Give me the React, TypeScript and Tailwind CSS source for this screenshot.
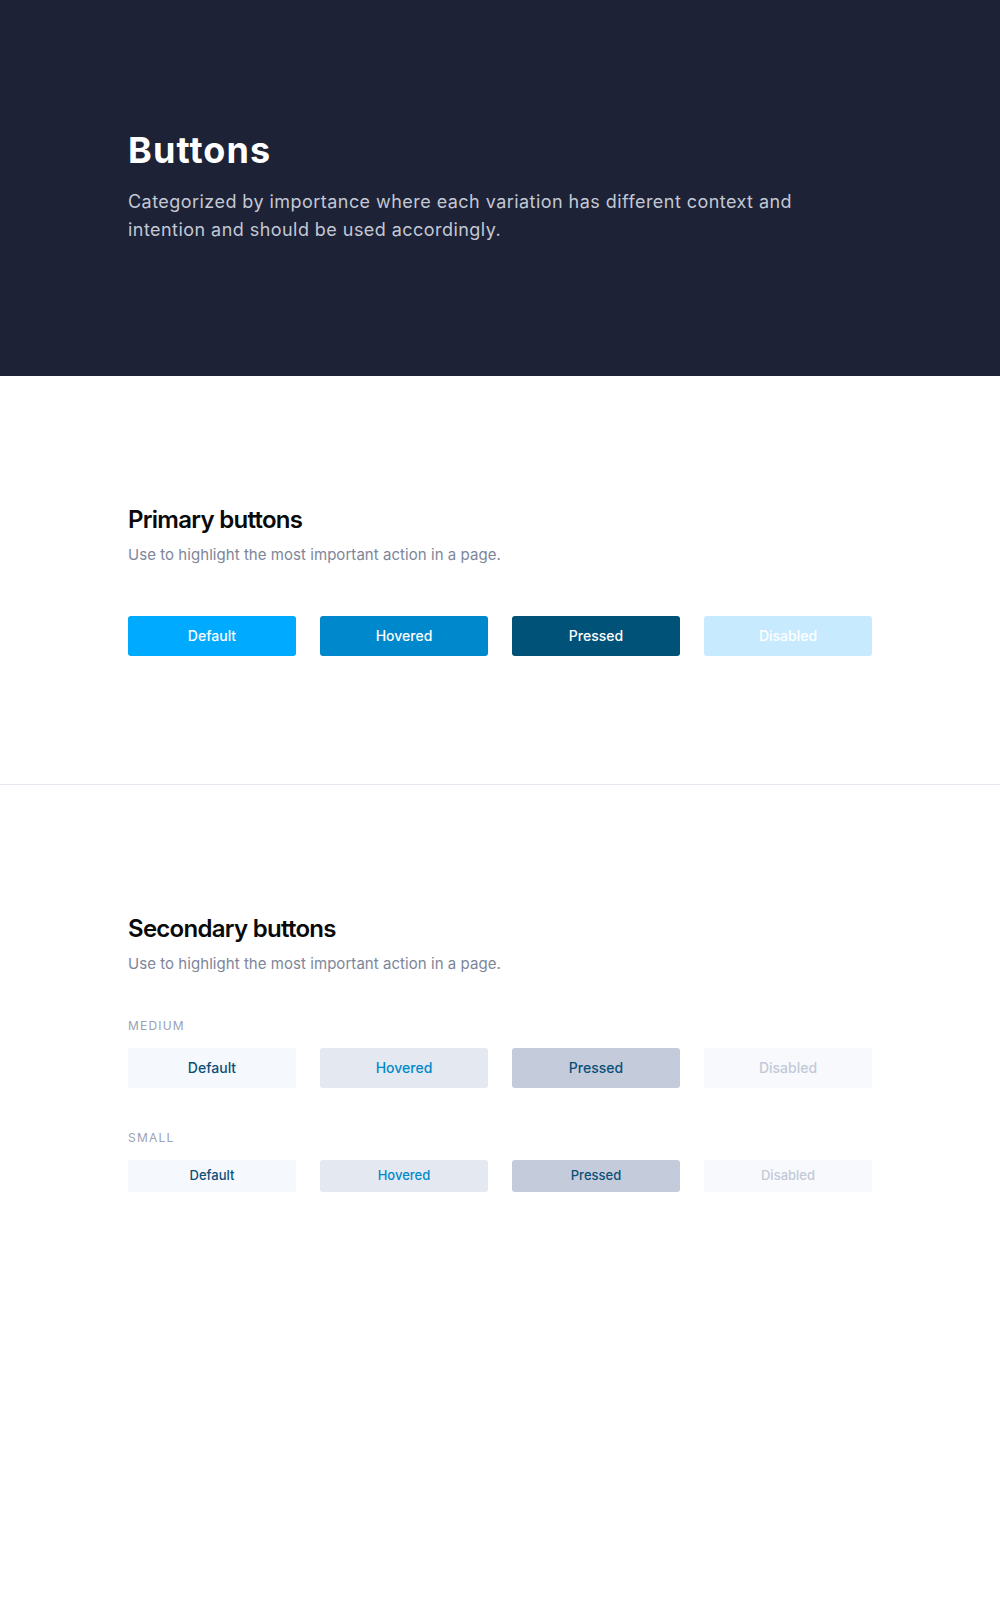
import React from "react";

const primary = [
  { label: "Default", cls: "bg-[#00aaff] text-white" },
  { label: "Hovered", cls: "bg-[#0088cc] text-white" },
  { label: "Pressed", cls: "bg-[#005278] text-white" },
  { label: "Disabled", cls: "bg-[#c7eaff] text-white" },
];

const secondary = [
  { label: "Default", cls: "bg-[#f5f8fc] text-[#0b4f78]" },
  { label: "Hovered", cls: "bg-[#e4e8f0] text-[#0088cc]" },
  { label: "Pressed", cls: "bg-[#c4cbda] text-[#0b4f78]" },
  { label: "Disabled", cls: "bg-[#f7f9fd] text-[#c3c9d7]" },
];

function SectionHead({ title }: { title: string }) {
  return (
    <>
      <h2 className="text-[24px] leading-8 font-semibold tracking-[-0.03em] text-[#0a0a0a]">{title}</h2>
      <p className="mt-[9px] text-[15px] leading-5 tracking-[0.05px] text-[#7d8699]">
        Use to highlight the most important action in a page.
      </p>
    </>
  );
}

export default function App() {
  return (
    <div className="min-h-[1600px] bg-white" style={{ fontFamily: "Inter, 'Noto Sans', sans-serif" }}>
      <header className="h-[376px] bg-[#1d2236] px-32 pt-[130px]">
        <h1 className="text-[36px] leading-10 font-bold tracking-[0.03em] text-white">Buttons</h1>
        <p className="mt-[18px] max-w-[700px] text-[18px] leading-7 tracking-[0.45px] text-[#c3c8d4]">
          Categorized by importance where each variation has different context and intention and should be used accordingly.
        </p>
      </header>

      <section className="px-32 pt-32 pb-32 border-b border-[#e5e8ee]">
        <SectionHead title="Primary buttons" />
        <div className="mt-[51px] flex gap-6">
          {primary.map((b) => (
            <div key={b.label} className={`w-[168px] h-10 pb-[2px] rounded-[3px] flex items-center justify-center text-[14px] font-medium ${b.cls}`}>
              {b.label}
            </div>
          ))}
        </div>
      </section>

      <section className="px-32 pt-32">
        <SectionHead title="Secondary buttons" />
        <div className="mt-[44px] text-[12px] leading-4 tracking-[0.1em] text-[#9aa2b4]">MEDIUM</div>
        <div className="mt-[14px] flex gap-6">
          {secondary.map((b) => (
            <div key={b.label} className={`w-[168px] h-10 pb-[2px] rounded-[3px] flex items-center justify-center text-[14px] font-medium ${b.cls}`}>
              {b.label}
            </div>
          ))}
        </div>
        <div className="mt-[42px] text-[12px] leading-4 tracking-[0.1em] text-[#9aa2b4]">SMALL</div>
        <div className="mt-[14px] flex gap-6">
          {secondary.map((b) => (
            <div key={b.label} className={`w-[168px] h-8 rounded-[3px] flex items-center justify-center text-[13px] font-medium ${b.cls}`}>
              {b.label}
            </div>
          ))}
        </div>
      </section>
    </div>
  );
}
